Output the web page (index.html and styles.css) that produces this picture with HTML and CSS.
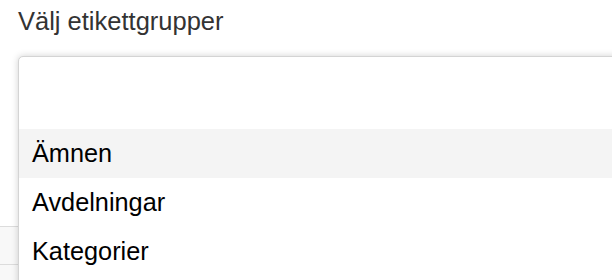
FILE: index.html
```html
<!DOCTYPE html>
<html lang="sv">
<head>
  <meta charset="UTF-8">
  <title>Välj etikettgrupper</title>
  <link rel="stylesheet" href="styles.css">
</head>
<body>

  <div class="picker">
    <label class="picker-label">Välj etikettgrupper</label>

    <!-- raderna bakom menyn -->
    <div class="backdrop">
      <div class="backdrop-row"></div>
      <div class="backdrop-row"></div>
    </div>

    <div class="menu">
      <div class="menu-input"></div>
      <ul class="menu-list">
        <li class="menu-item active">Ämnen</li>
        <li class="menu-item">Avdelningar</li>
        <li class="menu-item">Kategorier</li>
      </ul>
    </div>
  </div>

</body>
</html>
```

FILE: styles.css
```css
html, body {
  margin: 0;
  padding: 0;
  height: 100%;
  background: #fff;
  font-family: "Liberation Sans", Arial, sans-serif;
  overflow: hidden;
}

.picker {
  position: relative;
  height: 280px;
  padding: 7px 18px 0;
  box-sizing: border-box;
  overflow: hidden;
}

.picker-label {
  display: block;
  font-size: 25.5px;
  line-height: 29px;
  color: #333;
}

.backdrop {
  margin: 190px -18px 0;
}

.backdrop-row {
  height: 37px;
  background: #f8f8f8;
  border-top: 1px solid #dcdcdc;
}

.menu {
  position: absolute;
  top: 56px;
  left: 18px;
  right: -10px;
  bottom: -10px;
  background: #fff;
  border: 1px solid #d4d4d4;
  border-radius: 5px;
  box-shadow: 0 0 7px rgba(0, 0, 0, 0.18);
}

.menu-input {
  height: 72px;
}

.menu-list {
  list-style: none;
  margin: 0;
  padding: 0;
}

.menu-item {
  height: 49px;
  line-height: 49px;
  padding-left: 13px;
  font-size: 25.3px;
  color: #000;
}

.menu-item.active {
  background: #f4f4f4;
}
```
